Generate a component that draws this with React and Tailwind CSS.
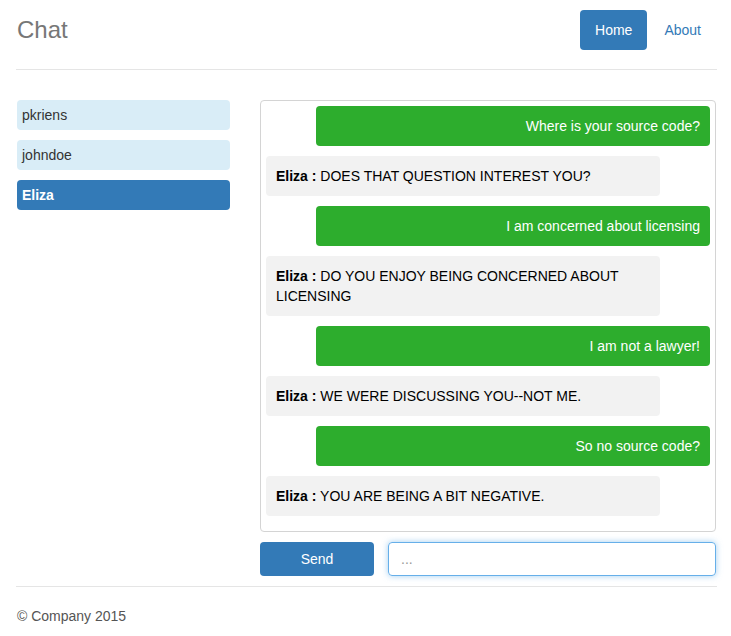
import React from "react";

const msgs = [
  { me: true, text: "Where is your source code?" },
  { me: false, text: "DOES THAT QUESTION INTEREST YOU?" },
  { me: true, text: "I am concerned about licensing" },
  { me: false, text: "DO YOU ENJOY BEING CONCERNED ABOUT LICENSING" },
  { me: true, text: "I am not a lawyer!" },
  { me: false, text: "WE WERE DISCUSSING YOU--NOT ME." },
  { me: true, text: "So no source code?" },
  { me: false, text: "YOU ARE BEING A BIT NEGATIVE." },
];

export default function App() {
  return (
    <div
      className="w-[731px] h-[636px] bg-white text-[14px] leading-[20px] text-[#333]"
      style={{ fontFamily: '"Liberation Sans", Arial, Helvetica, sans-serif' }}
    >
      <div className="pl-[16px] pr-[14px]">
        <div className="h-[70px] border-b border-[#e5e5e5] flex items-start justify-between">
          <div className="text-[24px] leading-[30px] text-[#777] mt-[15px] pl-[1px]">Chat</div>
          <div className="flex items-center mt-[10px]">
            <div className="h-[40px] px-[15px] flex items-center bg-[#337ab7] text-white rounded-[4px]">Home</div>
            <div className="h-[40px] px-[16px] flex items-center text-[#337ab7] ml-[1px]">About</div>
          </div>
        </div>
        <div className="flex mt-[30px]">
          <div className="w-[214px] pl-[1px] flex flex-col gap-[10px]">
            <div className="h-[30px] rounded-[4px] bg-[#d9edf7] px-[5px] flex items-center text-[#333]">pkriens</div>
            <div className="h-[30px] rounded-[4px] bg-[#d9edf7] px-[5px] flex items-center text-[#333]">johndoe</div>
            <div className="h-[30px] rounded-[4px] bg-[#337ab7] px-[5px] flex items-center text-white font-bold">Eliza</div>
          </div>
          <div className="ml-[30px] w-[456px]">
            <div className="border border-[#d4d4d4] rounded-[4px] px-[5px] pt-[5px] pb-[5px] h-[432px]">
              {msgs.map((m, i) =>
                m.me ? (
                  <div
                    key={i}
                    className="ml-[50px] mb-[10px] bg-[#2dad2d] text-white rounded-[4px] px-[10px] py-[10px] text-right"
                  >
                    {m.text}
                  </div>
                ) : (
                  <div
                    key={i}
                    className="mr-[50px] mb-[10px] bg-[#f2f2f2] text-black rounded-[4px] px-[10px] py-[10px] text-left"
                  >
                    <span className="font-bold">Eliza :</span> {m.text}
                  </div>
                )
              )}
            </div>
            <div className="flex mt-[10px] gap-[14px]">
              <div className="w-[114px] h-[34px] rounded-[4px] bg-[#337ab7] text-white flex items-center justify-center">
                Send
              </div>
              <div className="flex-1 h-[34px] rounded-[4px] border border-[#66afe9] shadow-[0_0_6px_rgba(102,175,233,0.6)] flex items-center px-[12px] text-[#999]">
                ...
              </div>
            </div>
          </div>
        </div>
        <div className="border-t border-[#e5e5e5] mt-[10px] pt-[19px]">
          <div className="pl-[1px] text-[#555]">© Company 2015</div>
        </div>
      </div>
    </div>
  );
}
